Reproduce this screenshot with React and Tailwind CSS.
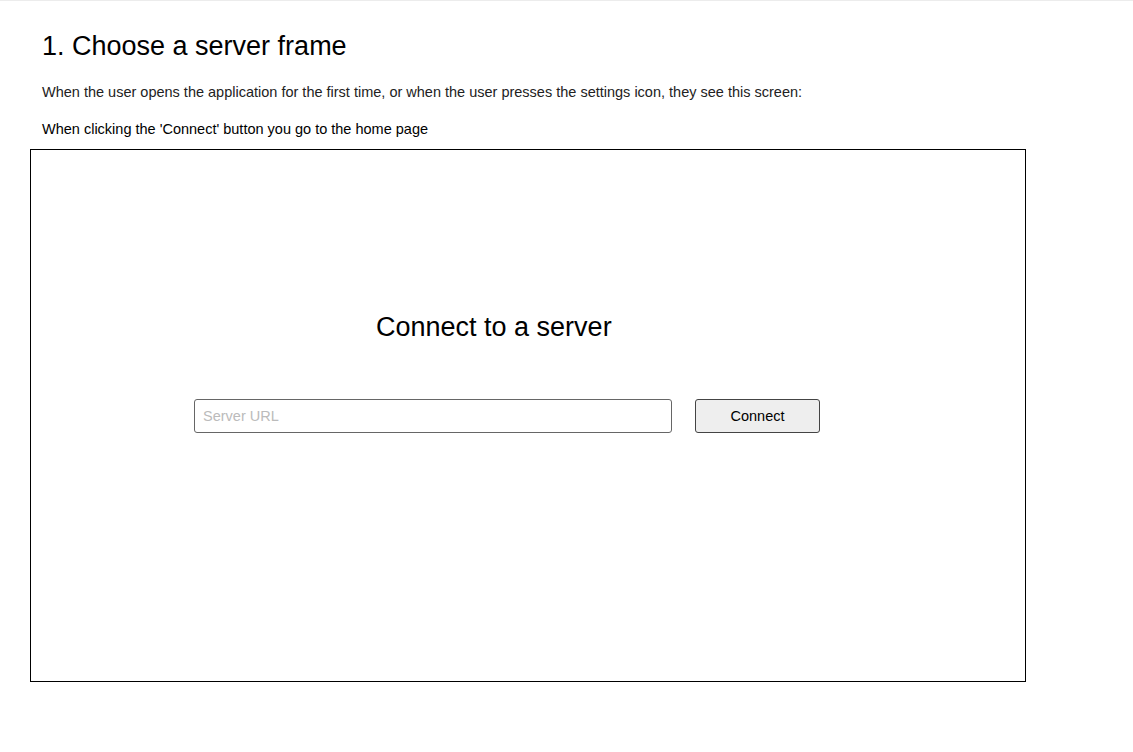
export default function App() {
  return (
    <div className="min-h-[752px] w-full bg-white font-['Liberation_Sans',Arial,sans-serif] text-black">
      <div className="h-px w-full bg-[#ececec]" />
      <div className="pl-[30px]">
        <h1 className="ml-[12px] pt-[29px] text-[27px] leading-[32px] text-black">1. Choose a server frame</h1>
        <p className="ml-[12px] mt-[22px] text-[14.5px] leading-[16px] text-[#222]">
          When the user opens the application for the first time, or when the user presses the settings icon, they see this screen:
        </p>
        <p className="ml-[12px] mt-[21px] text-[14.5px] leading-[16px] text-black">
          When clicking the 'Connect' button you go to the home page
        </p>
        <div className="mt-[12px] h-[533px] w-[996px] border border-black">
          <div className="ml-[345px] mt-[161px] text-[27px] leading-[32px]">Connect to a server</div>
          <div className="ml-[163px] mt-[56px] flex items-center">
            <div className="flex h-[34px] w-[478px] items-center rounded-[3px] border border-[#666] pl-[8px] pt-[2px] text-[14.5px] text-[#bbb]">
              Server URL
            </div>
            <div className="ml-[23px] flex h-[34px] w-[125px] items-center justify-center rounded-[3px] border border-[#444] bg-[#eee] pt-[2px] text-[14.5px] text-black">
              Connect
            </div>
          </div>
        </div>
      </div>
    </div>
  );
}
